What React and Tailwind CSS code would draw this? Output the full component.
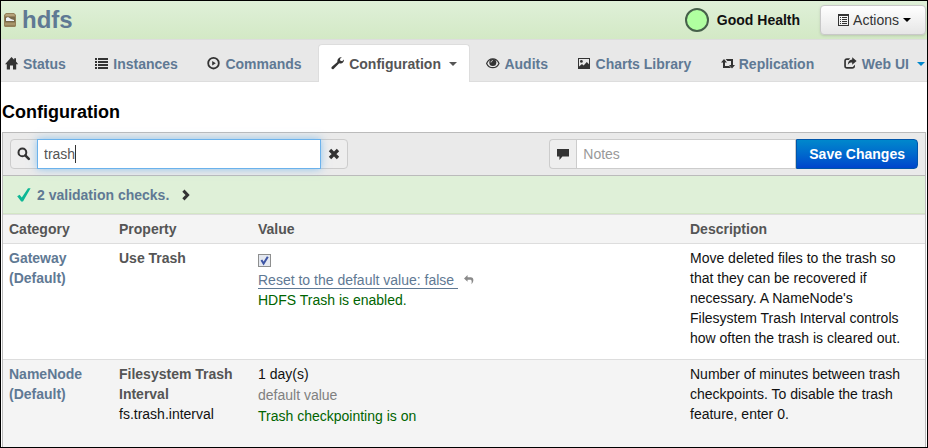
import { useState } from 'react';

function Icon({ children, className = '', size = 14 }) {
    return (
        <svg width={size} height={size} viewBox="0 0 14 14" fill="currentColor" className={`shrink-0 ${className}`} aria-hidden="true">
            {children}
        </svg>
    );
}

const HomeIcon = () => (
    <Icon>
        <path d="M6.5 0 L9.2 2.7 V1.2 H11 V4.5 L13.2 7.2 H11.2 V12.4 H8 V8.4 H5 V12.4 H1.8 V7.2 H0 Z" />
    </Icon>
);

const ListIcon = () => (
    <Icon>
        <path d="M0 1h2v2H0zM3 1h10v2H3zM0 4h2v2H0zM3 4h10v2H3zM0 7h2v2H0zM3 7h10v2H3zM0 10h2v2H0zM3 10h10v2H3z" />
    </Icon>
);

const PlayIcon = () => (
    <Icon>
        <circle cx="6.5" cy="6.2" r="5.3" fill="none" stroke="currentColor" strokeWidth="1.8" />
        <path d="M5.2 4 L8.8 6.2 L5.2 8.4 Z" />
    </Icon>
);

const WrenchIcon = () => (
    <Icon>
        <path d="M10.8 0.2 L8.9 2.1 L9.4 3.8 L11.2 4.2 L12.8 2.6 C13.3 4.8 11.6 6.6 9.6 6.5 C9.1 6.5 8.6 6.4 8.2 6.2 L2.8 11.7 C2.2 12.4 1.3 12.4 0.8 11.8 C0.2 11.2 0.3 10.4 0.9 9.8 L6.4 5 C5.8 2.4 8 -0.3 10.8 0.2 Z" />
    </Icon>
);

const EyeIcon = () => (
    <Icon>
        <path d="M0.6 6.4 C2 3.2 4.2 1.9 6.8 1.9 C9.4 1.9 11.6 3.2 13 6.4 C11.6 9.4 9.4 10.7 6.8 10.7 C4.2 10.7 2 9.4 0.6 6.4 Z" fill="none" stroke="currentColor" strokeWidth="1.2" />
        <circle cx="6.8" cy="5.6" r="3.5" />
        <path d="M5 5.4 C5 4.4 5.8 3.6 6.8 3.6" fill="none" stroke="#e8e8e8" strokeWidth="1" />
    </Icon>
);

const PictureIcon = () => (
    <Icon>
        <path fillRule="evenodd" d="M0 1 H12 V12 H0 Z M1 2 V9.6 L4 7 L5.6 8.4 L8.8 4.9 L11 7.2 V2 Z" />
        <circle cx="3.4" cy="4.4" r="1.4" />
    </Icon>
);

const RetweetIcon = () => (
    <Icon>
        <path d="M3 2 L6 5.4 H4 V9 H8.2 L10 11 H2 V5.4 H0 Z" />
        <path d="M11 11.4 L8 8 H10 V4 H6.4 L4.6 2 H12 V8 H14 Z" />
    </Icon>
);

const ShareIcon = () => (
    <Icon>
        <path d="M6.2 1.2 H3 C1.2 1.2 0.2 2.3 0.2 4 V9 C0.2 10.8 1.2 11.8 3 11.8 H8.2 C10 11.8 11 10.8 11 9 V7.8 L9.2 9.4 C9.1 9.9 8.8 10.1 8.2 10.1 H3 C2.2 10.1 1.9 9.8 1.9 9 V4 C1.9 3.2 2.2 2.9 3 2.9 H4.8 Z" />
        <path d="M8.2 0.2 L12.6 4 L8.2 7.8 V5.6 C6 5.6 4.9 6.2 3.8 8 C3.9 4.5 5.4 2.6 8.2 2.4 Z" />
    </Icon>
);

const ListAltIcon = () => (
    <Icon>
        <path fillRule="evenodd" d="M1 1 H12 V13 H1 Z M2 3 V12 H11 V3 Z" />
        <path d="M3 4h1v1H3zM5 4h5v1H5zM3 6h1v1H3zM5 6h5v1H5zM3 8h1v1H3zM5 8h5v1H5zM3 10h1v1H3zM5 10h5v1H5z" />
    </Icon>
);

const SearchIcon = () => (
    <Icon>
        <circle cx="5.4" cy="5.4" r="3.9" fill="none" stroke="currentColor" strokeWidth="2" />
        <path d="M8.3 8.3 L11.8 11.8" stroke="currentColor" strokeWidth="2.6" strokeLinecap="round" />
    </Icon>
);

const RemoveIcon = () => (
    <Icon>
        <path d="M3 3 L11 11 M11 3 L3 11" stroke="currentColor" strokeWidth="3.4" />
    </Icon>
);

const CommentIcon = () => (
    <Icon>
        <path d="M1 2 H13 V9.6 H6.4 L3.4 13 V9.6 H1 Z" />
    </Icon>
);

const ChevronIcon = () => (
    <Icon>
        <path d="M4.4 2.6 L8.6 7 L4.4 11.4" fill="none" stroke="currentColor" strokeWidth="3" />
    </Icon>
);

const TickIcon = () => (
    <Icon className="text-[#0db795]">
        <path d="M0.2 8.2 L2.6 6.8 L4.8 9.6 L11 0.2 H13.6 L6 13.4 H4.2 Z" />
    </Icon>
);

const UndoIcon = () => (
    <Icon size={10} className="text-[#8a8a8a]">
        <path d="M5 0 L0 4.8 L5 9.6 V6.8 H8.6 C10.6 6.8 11.2 8 10.4 13 C14 9.4 14.4 3.2 9.4 3.2 H5 Z" />
    </Icon>
);

// small elephant-on-crate service logo
const ServiceLogo = () => (
    <svg width="12" height="16" viewBox="0 0 12 16" className="shrink-0" aria-hidden="true">
        <path d="M2 1 H10 L12 3 V14 L11 15 H1 L0 14 V3 Z" fill="#94815a" />
        <path d="M2 2 H10 L11 4 H1 Z" fill="#b5a27a" />
        <rect x="1" y="5" width="10" height="5" fill="#77694b" />
        <path d="M2 9 V6 L4 5 L7 7 L10 8 V9 Z" fill="#eef1f6" />
        <rect x="1" y="11" width="10" height="2" fill="#a8956b" />
    </svg>
);

function Caret({ className = '' }) {
    return <span className={`border-x-4 border-t-4 border-x-transparent ${className}`} />;
}

const tabs = [
    { label: 'Status', icon: <HomeIcon /> },
    { label: 'Instances', icon: <ListIcon /> },
    { label: 'Commands', icon: <PlayIcon /> },
    { label: 'Configuration', icon: <WrenchIcon />, active: true, caret: 'border-t-[#555]' },
    { label: 'Audits', icon: <EyeIcon /> },
    { label: 'Charts Library', icon: <PictureIcon /> },
    { label: 'Replication', icon: <RetweetIcon /> },
    { label: 'Web UI', icon: <ShareIcon />, caret: 'border-t-[#0088cc]' },
];

function Tab({ label, icon, active, caret }) {
    return (
        <a
            href="#"
            className={`flex h-[38px] shrink-0 items-center rounded-t border border-b-0 px-3 font-bold whitespace-nowrap ${
                active ? 'border-[#ddd] bg-white text-[#555]' : 'border-transparent text-[#5f7994]'
            }`}
        >
            <span className="mr-1 text-[#333]">{icon}</span>
            {label}
            {caret && <Caret className={`ml-2 ${caret}`} />}
        </a>
    );
}

export default function App() {
    const [query, setQuery] = useState('trash');
    const [notes, setNotes] = useState('');
    const [useTrash, setUseTrash] = useState(true);

    return (
        <div className="flex min-h-screen flex-col overflow-hidden border border-black bg-white font-['Liberation_Sans',Arial,sans-serif] text-sm leading-5 text-[#111]">
            {/* Service header */}
            <header className="flex h-[38px] items-center bg-linear-to-b from-[#dff0d8] to-[#d3e9c5] pr-px pl-[3px]">
                <ServiceLogo />
                <h1 className="ml-[6px] text-2xl font-bold text-[#5f7994]">hdfs</h1>
                <div className="ml-auto flex items-center gap-2">
                    <span className="h-6 w-6 rounded-full border-2 border-[#46604a] bg-[#b0ffa0]" />
                    <span className="font-bold">Good Health</span>
                </div>
                <button className="ml-5 flex h-[30px] items-center rounded border border-[#c8c8c8] bg-linear-to-b from-white to-[#e6e6e6] pr-[14px] pl-4 text-[#333] shadow-sm">
                    <ListAltIcon />
                    <span className="mr-1 ml-[2px]">Actions</span>
                    <Caret className="border-t-black" />
                </button>
            </header>

            {/* Tabs */}
            <nav className="border-y border-[#ddd] bg-[#e8e8e8]">
                <div className="-mr-[11px] -mb-px -ml-[9px] flex justify-between gap-[2px] pt-1">
                    {tabs.map((tab) => (
                        <Tab key={tab.label} {...tab} />
                    ))}
                </div>
            </nav>

            <main className="flex flex-1 flex-col px-px">
                <h2 className="pt-5 pb-[10px] text-lg leading-5 font-bold text-black">Configuration</h2>

                <div className="flex flex-1 flex-col border border-b-0 border-[#bbb]">
                    {/* Search and save bar */}
                    <div className="flex justify-between border-b border-[#bbb] bg-[#eaeaea] px-[7px] py-[6px]">
                        <div className="flex h-[30px] rounded border border-[#ccc] bg-[#eee] text-[#333]">
                            <label htmlFor="search" className="flex w-[26px] items-center justify-center" aria-label="Search">
                                <SearchIcon />
                            </label>
                            <div className="relative -my-px flex">
                                <input
                                    id="search"
                                    value={query}
                                    onChange={(e) => setQuery(e.target.value)}
                                    className="w-[284px] border border-[#6bb2ec] bg-white px-[6px] text-[#555] caret-transparent shadow-[0_0_8px_rgba(82,168,236,0.6)] outline-none"
                                />
                                {/* text cursor sits right after the query */}
                                <span className="pointer-events-none absolute inset-y-1 left-[7px] flex items-center" aria-hidden="true">
                                    <span className="invisible whitespace-pre">{query}</span>
                                    <span className="h-[18px] w-px bg-[#333]" />
                                </span>
                            </div>
                            <button className="flex w-[26px] items-center justify-center" aria-label="Clear">
                                <RemoveIcon />
                            </button>
                        </div>
                        <div className="flex h-[30px]">
                            <label
                                htmlFor="notes"
                                aria-label="Notes"
                                className="flex w-[27px] items-center justify-center rounded-l border border-r-0 border-[#ccc] bg-[#eee] text-[#333]"
                            >
                                <CommentIcon />
                            </label>
                            <input
                                id="notes"
                                placeholder="Notes"
                                value={notes}
                                onChange={(e) => setNotes(e.target.value)}
                                className="w-[220px] border border-[#ccc] bg-white px-[6px] outline-none placeholder:text-[#999]"
                            />
                            <button className="rounded-r border border-[#0055aa] bg-linear-to-b from-[#0088cc] to-[#0044cc] px-3 font-bold text-white">
                                Save Changes
                            </button>
                        </div>
                    </div>

                    {/* Validation summary */}
                    <div className="flex h-[38px] items-center gap-[6px] border-b border-[#d3e6c5] bg-[#dff0d8] pl-[14px] text-[#333]">
                        <TickIcon />
                        <a href="#" className="mr-1 font-bold text-[#5f7994]">2 validation checks.</a>
                        <ChevronIcon />
                    </div>

                    <div className="flex-1 border-t border-[#ddd] bg-[#f4f4f4]">
                        <table className="w-full table-fixed border-collapse text-left">
                            <colgroup>
                                <col className="w-[110px]" />
                                <col className="w-[139px]" />
                                <col />
                                <col className="w-[241px]" />
                            </colgroup>
                            <thead>
                                <tr className="text-[#555]">
                                    <th className="px-[6px] py-1">Category</th>
                                    <th className="px-[6px] py-1">Property</th>
                                    <th className="px-[6px] py-1">Value</th>
                                    <th className="px-[6px] py-1">Description</th>
                                </tr>
                            </thead>
                            <tbody>
                                <tr className="border-t border-[#ddd] bg-white align-top">
                                    <td className="px-[6px] pt-1 pb-[11px]">
                                        <a href="#" className="font-bold text-[#5f7994]">Gateway (Default)</a>
                                    </td>
                                    <td className="px-[6px] pt-1 font-bold text-[#555]">Use Trash</td>
                                    <td className="px-[6px] pt-[6px]">
                                        <label className="flex h-5 items-center">
                                            <input
                                                type="checkbox"
                                                aria-label="Use Trash"
                                                checked={useTrash}
                                                onChange={(e) => setUseTrash(e.target.checked)}
                                                className="peer h-[13px] w-[13px] appearance-none border border-[#8e8f8f] bg-[#e4e8f0]"
                                            />
                                            <svg viewBox="0 0 13 13" className="pointer-events-none -ml-[13px] hidden h-[13px] w-[13px] peer-checked:block">
                                                <path d="M3.4 6 L5.6 9.6 L9.8 2.8" fill="none" stroke="#3d55a5" strokeWidth="2" />
                                            </svg>
                                        </label>
                                        <a href="#" className="flex h-5 items-center gap-[6px] text-[#5f7994]">
                                            <span className="border-b border-[#5f7994] leading-4 whitespace-pre">Reset to the default value: false </span>
                                            <UndoIcon />
                                        </a>
                                        <p className="text-[#006400]">HDFS Trash is enabled.</p>
                                    </td>
                                    <td className="px-[6px] pt-1 pb-[11px]">
                                        Move deleted files to the trash so that they can be recovered if necessary. A NameNode's Filesystem Trash
                                        Interval controls how often the trash is cleared out.
                                    </td>
                                </tr>
                                <tr className="border-t border-[#ddd] align-top">
                                    <td className="px-[6px] pt-1">
                                        <a href="#" className="font-bold text-[#5f7994]">NameNode (Default)</a>
                                    </td>
                                    <td className="px-[6px] pt-1">
                                        <span className="block font-bold text-[#555]">Filesystem Trash Interval</span>
                                        fs.trash.interval
                                    </td>
                                    <td className="px-[6px] pt-1">
                                        <p>1 day(s)</p>
                                        <p className="leading-[22px] text-[#808080]">default value</p>
                                        <p className="text-[#006400]">Trash checkpointing is on</p>
                                    </td>
                                    <td className="px-[6px] pt-1 pb-5">
                                        Number of minutes between trash checkpoints. To disable the trash feature, enter 0.
                                    </td>
                                </tr>
                            </tbody>
                        </table>
                    </div>
                </div>
            </main>
        </div>
    );
}
